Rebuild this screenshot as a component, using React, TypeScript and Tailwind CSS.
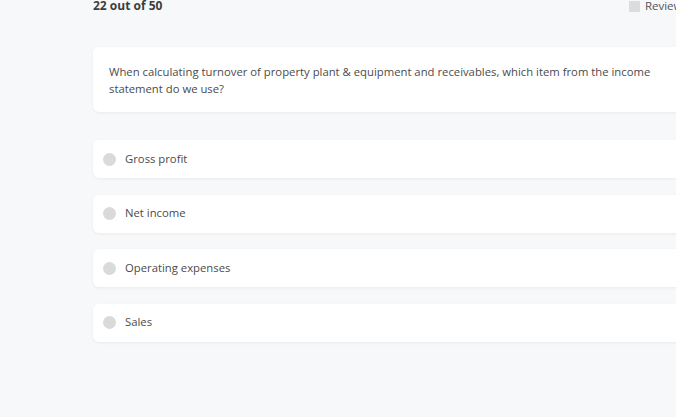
import React from "react";

const options = ["Gross profit", "Net income", "Operating expenses", "Sales"];

export default function App() {
  return (
    <div
      className="h-[417px] w-[676px] overflow-hidden bg-[#f7f8fa] text-[#4b4b4b]"
      style={{ fontFamily: '"Open Sans", "Noto Sans", sans-serif' }}
    >
      <div className="ml-[93px] w-[620px]">
        {/* header row */}
        <div className="mt-[-3px] flex items-center justify-between">
          <span className="text-[12px] font-bold text-[#3d3d3d]">22 out of 50</span>
          <label className="mr-[3px] flex items-center gap-[5px] text-[11.5px] text-[#555]">
            <span className="h-[11px] w-[11px] rounded-[1px] bg-[#dcdcdc]" />
            Review later
          </label>
        </div>

        {/* question card */}
        <div className="mt-[32px] rounded-[6px] bg-white px-[16px] pt-[16px] pb-[15px] text-[11.3px] leading-[17px] shadow-[0_1px_3px_rgba(0,0,0,0.06)]">
          When calculating turnover of property plant &amp; equipment and receivables, which item from the income
          statement do we use?
        </div>

        {/* answer options */}
        <div className="mt-[28px] flex flex-col gap-[16.5px]">
          {options.map((opt) => (
            <div
              key={opt}
              className="flex h-[38px] items-center gap-[9px] rounded-[6px] bg-white pl-[10px] text-[11.3px] shadow-[0_1px_3px_rgba(0,0,0,0.06)]"
            >
              <span className="h-[13px] w-[13px] rounded-full bg-[#dadada]" />
              <span>{opt}</span>
            </div>
          ))}
        </div>
      </div>
    </div>
  );
}
